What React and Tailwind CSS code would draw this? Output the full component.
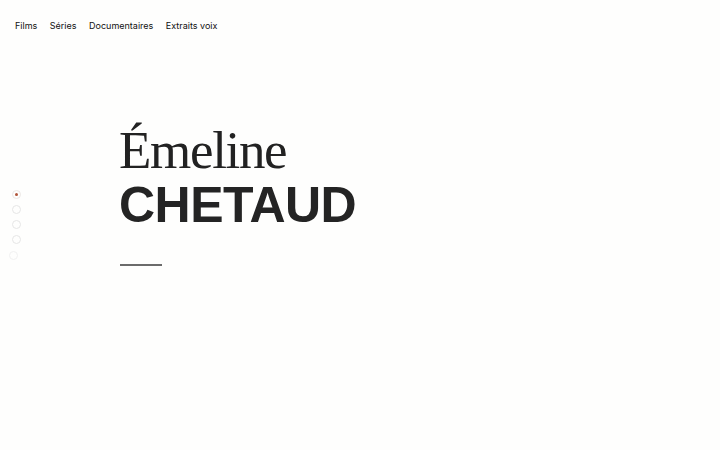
const navItems = ['Films', 'Séries', 'Documentaires', 'Extraits voix'];

export default function App() {
  return (
    <div className="relative w-[720px] h-[450px] bg-[#fefefd] text-[#222] overflow-hidden">
      <header className="flex gap-[12.5px] pl-[15px] pt-[18.5px] text-[9px] leading-[13px] text-[#111] font-['Inter',sans-serif]">
        {navItems.map((item) => (
          <a key={item} href="#">
            {item}
          </a>
        ))}
      </header>

      {/* slide indicator */}
      <div className="absolute left-[12px] top-[189.5px] flex flex-col gap-[6.3px]">
        <span className="w-[9px] h-[9px] rounded-full border border-[#ebe7e4] flex items-center justify-center">
          <span className="w-[3px] h-[3px] rounded-full bg-[#b0553a]" />
        </span>
        <span className="w-[9px] h-[9px] rounded-full border border-[#e6e6e6]" />
        <span className="w-[9px] h-[9px] rounded-full border border-[#e6e6e6]" />
        <span className="w-[9px] h-[9px] rounded-full border border-[#e6e6e6]" />
        <span className="w-[9px] h-[9px] rounded-full border border-[#f1f1f1] -ml-[3px]" />
      </div>

      <main className="pl-[119px] pt-[90px]">
        <h1 className="flex flex-col">
          <span className="font-['Liberation_Serif',serif] font-normal text-[53px] leading-[56px] tracking-[-0.025em] text-[#222]">
            Émeline
          </span>
          <span className="font-['Liberation_Sans',sans-serif] font-bold text-[50px] leading-[50px] tracking-[-0.01em] text-[#242424] mt-[2px]">
            CHETAUD
          </span>
        </h1>
        <div className="mt-[34px] ml-[1px] w-[42px] h-[2px] bg-[#6b6b6b]" />
      </main>
    </div>
  );
}
